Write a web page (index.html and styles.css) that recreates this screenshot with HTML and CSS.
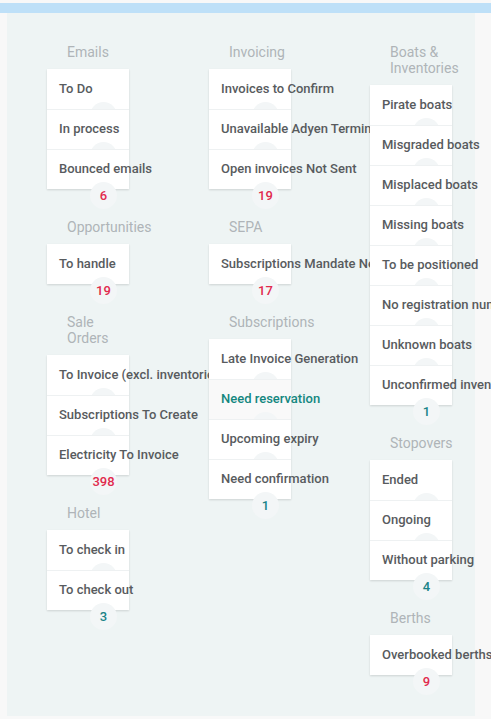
FILE: index.html
```html
<!DOCTYPE html>
<html>
<head>
<meta charset="utf-8">
<link rel="stylesheet" href="styles.css">
</head>
<body>
<div class="topbar"></div>
<div class="page">
  <div class="panel">
    <div class="col">
      <div class="group">
        <div class="title">Emails</div>
        <div class="card">
          <div class="row">To Do<span class="badge"></span></div>
          <div class="row">In process<span class="badge"></span></div>
          <div class="row">Bounced emails<span class="badge red">6</span></div>
        </div>
      </div>
      <div class="group">
        <div class="title">Opportunities</div>
        <div class="card">
          <div class="row">To handle<span class="badge red">19</span></div>
        </div>
      </div>
      <div class="group">
        <div class="title">Sale Orders</div>
        <div class="card">
          <div class="row">To Invoice (excl. inventories)<span class="badge"></span></div>
          <div class="row">Subscriptions To Create<span class="badge"></span></div>
          <div class="row">Electricity To Invoice<span class="badge red">398</span></div>
        </div>
      </div>
      <div class="group">
        <div class="title">Hotel</div>
        <div class="card">
          <div class="row">To check in<span class="badge"></span></div>
          <div class="row">To check out<span class="badge teal">3</span></div>
        </div>
      </div>
    </div>
    <div class="col">
      <div class="group">
        <div class="title">Invoicing</div>
        <div class="card">
          <div class="row">Invoices to Confirm<span class="badge"></span></div>
          <div class="row">Unavailable Adyen Terminals<span class="badge"></span></div>
          <div class="row">Open invoices Not Sent<span class="badge red">19</span></div>
        </div>
      </div>
      <div class="group">
        <div class="title">SEPA</div>
        <div class="card">
          <div class="row">Subscriptions Mandate Needed<span class="badge red">17</span></div>
        </div>
      </div>
      <div class="group">
        <div class="title">Subscriptions</div>
        <div class="card">
          <div class="row">Late Invoice Generation<span class="badge"></span></div>
          <div class="row active">Need reservation<span class="badge"></span></div>
          <div class="row">Upcoming expiry<span class="badge"></span></div>
          <div class="row">Need confirmation<span class="badge teal">1</span></div>
        </div>
      </div>
    </div>
    <div class="col">
      <div class="group">
        <div class="title">Boats &amp; Inventories</div>
        <div class="card">
          <div class="row">Pirate boats<span class="badge"></span></div>
          <div class="row">Misgraded boats<span class="badge"></span></div>
          <div class="row">Misplaced boats<span class="badge"></span></div>
          <div class="row">Missing boats<span class="badge"></span></div>
          <div class="row">To be positioned<span class="badge"></span></div>
          <div class="row">No registration number<span class="badge"></span></div>
          <div class="row">Unknown boats<span class="badge"></span></div>
          <div class="row">Unconfirmed inventories<span class="badge teal">1</span></div>
        </div>
      </div>
      <div class="group">
        <div class="title">Stopovers</div>
        <div class="card">
          <div class="row">Ended<span class="badge"></span></div>
          <div class="row">Ongoing<span class="badge"></span></div>
          <div class="row">Without parking<span class="badge teal">4</span></div>
        </div>
      </div>
      <div class="group">
        <div class="title">Berths</div>
        <div class="card">
          <div class="row">Overbooked berths<span class="badge red">9</span></div>
        </div>
      </div>
    </div>
  </div>
</div>
</body>
</html>
```

FILE: styles.css
```css
html, body {
  margin: 0;
  padding: 0;
  overflow: hidden;
  height: 719px;
}
body {
  background: #f8f8f8;
  font-family: Roboto, "Liberation Sans", sans-serif;
}
.topbar {
  height: 10px;
  margin-top: 3px;
  background: #bee0f8;
}
.page {
  padding-left: 7px;
}
.panel {
  width: 468px;
  height: 703px;
  box-sizing: border-box;
  background: #eef4f4;
  padding: 31px 0 0 40px;
  display: flex;
  gap: 80px;
}
.col {
  width: 82px;
  flex: none;
  display: flex;
  flex-direction: column;
  gap: 30px;
}
.col + .col + .col {
  margin-left: -1px;
}
.title {
  width: 62px;
  margin-left: 20px;
  font-size: 14px;
  line-height: 16px;
  color: #afb4b8;
  margin-bottom: 9px;
}
.card {
  background: #fff;
  box-shadow: 0 1px 2px rgba(0, 0, 0, 0.14);
}
.row {
  position: relative;
  height: 40px;
  box-sizing: border-box;
  padding-left: 12px;
  line-height: 40px;
  font-size: 13px;
  font-weight: 500;
  color: #585b5e;
  white-space: nowrap;
  background: #fff;
}
.row + .row {
  border-top: 1px solid #eef1f2;
  line-height: 38px;
}
.row.active {
  background: #f9f9f9;
  color: #14877f;
}
.badge {
  position: absolute;
  left: 43px;
  top: 33px;
  width: 27px;
  height: 27px;
  border-radius: 50%;
  background: #f3f6f7;
  text-align: center;
  line-height: 27px;
  font-size: 13px;
  font-weight: 500;
}
.row + .row .badge {
  top: 32px;
}
.badge.red {
  color: #e12a4d;
}
.badge.teal {
  color: #1a8489;
}
```
